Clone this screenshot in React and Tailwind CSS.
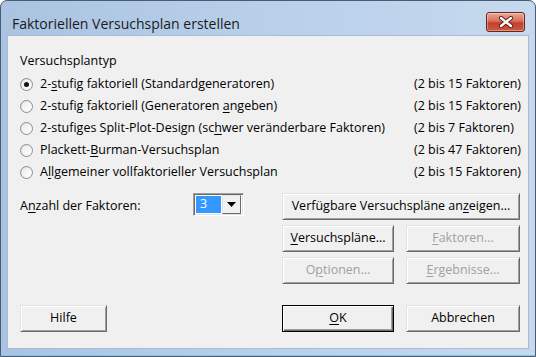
import React from "react";

const font = { fontFamily: '"Open Sans", "Noto Sans", sans-serif' };

const U = ({ children }) => <span className="underline underline-offset-2">{children}</span>;

const Radio = ({ checked }) => (
  <div className="w-[13px] h-[13px] rounded-full border border-[#8e8f8f] bg-[linear-gradient(135deg,#dcdcdc,#ffffff)] flex items-center justify-center shrink-0">
    <div className="w-[9px] h-[9px] rounded-full bg-[linear-gradient(135deg,#ececec,#ffffff)] flex items-center justify-center">
      {checked && <div className="w-[5px] h-[5px] rounded-full bg-[#141414]" />}
    </div>
  </div>
);

const Btn = ({ children, disabled, isDefault, className = "" }) => (
  <div
    className={
      "h-[27px] flex items-center justify-center text-[12.5px] bg-[#f0f0f0] " +
      (isDefault
        ? "border border-[#000000] shadow-[inset_1px_1px_0_#ffffff,inset_-1px_-1px_0_#696969,inset_-2px_-2px_0_#a0a0a0] "
        : "border border-t-[#e3e3e3] border-l-[#e3e3e3] border-r-[#696969] border-b-[#696969] shadow-[inset_1px_1px_0_#ffffff,inset_-1px_-1px_0_#a0a0a0] ") +
      (disabled ? "text-[#a0a0a0] " : "text-[#000000] ") +
      className
    }
  >
    {children}
  </div>
);

const rows = [
  { label: <>2-<U>s</U>tufig faktoriell (Standardgeneratoren)</>, range: "(2 bis 15 Faktoren)", checked: true },
  { label: <>2-stufig faktoriell (Generatoren <U>a</U>ngeben)</>, range: "(2 bis 15 Faktoren)" },
  { label: <>2-stufiges Split-Plot-Design (sc<U>h</U>wer veränderbare Faktoren)</>, range: "(2 bis 7 Faktoren)" },
  { label: <>Plackett-<U>B</U>urman-Versuchsplan</>, range: "(2 bis 47 Faktoren)" },
  { label: <>A<U>l</U>lgemeiner vollfaktorieller Versuchsplan</>, range: "(2 bis 15 Faktoren)" },
];

export default function App() {
  return (
    <div className="w-[536px] h-[357px] bg-white overflow-hidden" style={font}>
      <div className="w-[536px] h-[357px] rounded-t-[7px] border border-[#4b5b70] bg-[linear-gradient(90deg,#a9c3e1_0%,#b9d0ea_50%,#c6d9ee_100%)] flex flex-col">
        {/* title bar */}
        <div className="h-[34px] flex items-start pl-[11px] pr-[10px] shrink-0">
          <div className="flex-1 text-[14px] text-[#1b1b1b] pt-[13px] leading-[20px]">Faktoriellen Versuchsplan erstellen</div>
          <div className="w-[39px] h-[20px] mt-[11px] rounded-[3px] border border-[#6a2418] bg-[linear-gradient(180deg,#eaa89a_0%,#d9705c_45%,#c2402a_55%,#cf5a41_100%)] flex items-center justify-center shadow-[inset_0_0_0_1px_rgba(255,255,255,0.35)]">
            <svg width="16" height="12" viewBox="0 0 16 12">
              <path d="M3 2 L13 10 M13 2 L3 10" stroke="#5b1d12" strokeWidth="4.2" strokeLinecap="round" />
              <path d="M3 2 L13 10 M13 2 L3 10" stroke="#ffffff" strokeWidth="2.4" strokeLinecap="round" />
            </svg>
          </div>
        </div>

        {/* client area */}
        <div className="mx-[6px] h-[314px] bg-[#f0f0f0] border border-[#a7bcd6] flex flex-col pl-[12px] pt-[16px] text-[12.5px] text-[#000000]">
          <div className="h-[17px] leading-[17px]">Versuchsplantyp</div>
          <div className="mt-[4px] flex flex-col">
            {rows.map((r, i) => (
              <div key={i} className="h-[22px] grid grid-cols-[394px_1fr] items-center">
                <div className="flex items-center gap-[7px] whitespace-nowrap">
                  <Radio checked={r.checked} />
                  <span>{r.label}</span>
                </div>
                <div className="whitespace-nowrap">{r.range}</div>
              </div>
            ))}
          </div>

          <div className="mt-[10px] flex">
            <div className="w-[262px] h-[139px] flex flex-col justify-between">
              <div className="flex items-center h-[23px]">
                <div className="w-[173px] pt-[3px]">A<U>n</U>zahl der Faktoren:</div>
                <div className="w-[51px] h-[23px] border border-t-[#a0a0a0] border-l-[#a0a0a0] border-r-[#ffffff] border-b-[#ffffff] shadow-[inset_1px_1px_0_#696969,inset_-1px_-1px_0_#e3e3e3] bg-white flex items-center p-[2px]">
                  <div className="w-[25px] h-[17px] bg-[#3399ff] text-white flex items-center pl-[4px]">3</div>
                  <div className="ml-[1px] w-[19px] h-[19px] bg-[#f0f0f0] border border-t-[#e3e3e3] border-l-[#e3e3e3] border-r-[#696969] border-b-[#696969] flex items-center justify-center">
                    <svg width="9" height="5" viewBox="0 0 9 5">
                      <path d="M0 0 H9 L4.5 5 Z" fill="#000" />
                    </svg>
                  </div>
                </div>
              </div>
              <Btn className="w-[87px]">Hilfe</Btn>
            </div>

            <div className="w-[238px] grid grid-cols-[112px_114px] gap-x-[12px] gap-y-[5px]">
              <Btn className="col-span-2">
                Verfügbare Versuchspläne an<U>z</U>eigen...
              </Btn>
              <Btn>
                <U>V</U>ersuchspläne...
              </Btn>
              <Btn disabled>
                <U>F</U>aktoren...
              </Btn>
              <Btn disabled>
                O<U>p</U>tionen...
              </Btn>
              <Btn disabled>
                <U>E</U>rgebnisse...
              </Btn>
              <Btn isDefault className="mt-[16px]">
                <U>O</U>K
              </Btn>
              <Btn className="mt-[16px]">Abbrechen</Btn>
            </div>
          </div>
        </div>
        <div className="flex-1 border-b border-[#7ec8ea]" />
      </div>
    </div>
  );
}
